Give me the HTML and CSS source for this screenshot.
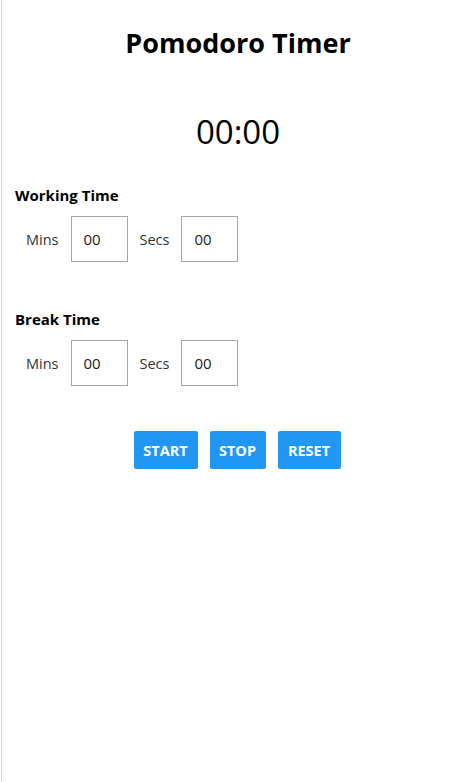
FILE: index.html
```html
<!DOCTYPE html>
<html>
<head>
<meta charset="utf-8">
<link rel="stylesheet" href="styles.css">
</head>
<body>
<div class="app">
  <h1 class="title">Pomodoro Timer</h1>
  <div class="clock">00:00</div>
  <section class="block">
    <h2 class="block-title">Working Time</h2>
    <div class="row">
      <span class="lbl">Mins</span>
      <input class="field" type="text" value="00">
      <span class="lbl">Secs</span>
      <input class="field" type="text" value="00">
    </div>
  </section>
  <section class="block block-break">
    <h2 class="block-title">Break Time</h2>
    <div class="row">
      <span class="lbl">Mins</span>
      <input class="field" type="text" value="00">
      <span class="lbl">Secs</span>
      <input class="field" type="text" value="00">
    </div>
  </section>
  <div class="actions">
    <button class="btn btn-start">START</button>
    <button class="btn btn-stop">STOP</button>
    <button class="btn btn-reset">RESET</button>
  </div>
</div>
</body>
</html>
```

FILE: styles.css
```css
html, body {
  margin: 0;
  padding: 0;
  background: #fff;
}
body {
  font-family: "Open Sans", "Noto Sans", sans-serif;
  color: #000;
}
.app {
  margin-left: 1px;
  border-left: 1px solid #dcdcdc;
  min-height: 782px;
  box-sizing: border-box;
}
.title {
  margin: 0;
  padding: 24px 0 0 22px;
  font-size: 27px;
  line-height: 38px;
  font-weight: 700;
  text-align: center;
}
.clock {
  margin-top: 46px;
  padding-left: 22px;
  text-align: center;
  font-size: 33px;
  line-height: 48px;
  font-weight: 400;
}
.block {
  margin-top: 29px;
  padding-left: 13px;
}
.block-break {
  margin-top: 47px;
}
.block-title {
  margin: 0;
  font-size: 15px;
  line-height: 20px;
  font-weight: 700;
}
.row {
  display: flex;
  align-items: center;
  margin-top: 11px;
  padding-left: 11px;
}
.lbl {
  font-size: 14.5px;
  color: #333;
  margin-right: 12px;
}
.field {
  width: 57px;
  height: 46px;
  box-sizing: border-box;
  border: 1px solid #a6a6a6;
  padding: 0 0 0 12px;
  margin: 0 12px 0 0;
  font-family: inherit;
  font-size: 15px;
  color: #222;
  outline: none;
}
.actions {
  display: flex;
  justify-content: center;
  gap: 12px;
  margin-top: 45px;
  padding-left: 20px;
}
.btn {
  height: 38px;
  padding: 0 8px;
  border: none;
  border-radius: 2px;
  background: #2196f3;
  color: #fff;
  font-family: inherit;
  font-size: 14.5px;
  font-weight: 700;
  cursor: pointer;
}
.btn-start { width: 64px; }
.btn-stop { width: 56px; }
.btn-reset { width: 63px; }
```
